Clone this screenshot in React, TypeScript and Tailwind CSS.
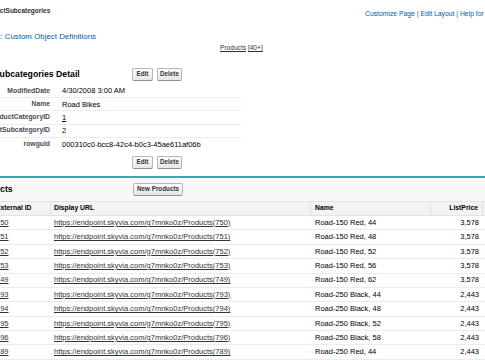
import React from "react";

const rows = [
  ["750", "Road-150 Red, 44", "3,578"],
  ["751", "Road-150 Red, 48", "3,578"],
  ["752", "Road-150 Red, 52", "3,578"],
  ["753", "Road-150 Red, 56", "3,578"],
  ["749", "Road-150 Red, 62", "3,578"],
  ["793", "Road-250 Black, 44", "2,443"],
  ["794", "Road-250 Black, 48", "2,443"],
  ["795", "Road-250 Black, 52", "2,443"],
  ["796", "Road-250 Black, 58", "2,443"],
  ["789", "Road-250 Red, 44", "2,443"],
];

const details: [string, React.ReactNode][] = [
  ["ModifiedDate", "4/30/2008 3:00 AM"],
  ["Name", "Road Bikes"],
  ["ProductCategoryID", <span className="underline">1</span>],
  ["ProductSubcategoryID", "2"],
  ["rowguid", "000310c0-bcc8-42c4-b0c3-45ae611af06b"],
];

function Btn({ children, w }: { children: React.ReactNode; w: string }) {
  return (
    <button
      className={
        "h-[13px] shrink-0 rounded-[2px] border border-[#b5b5b5] border-b-[#8f8f8f] bg-gradient-to-b from-white to-[#e6e6e7] text-[6.3px] font-bold leading-none text-[#333] " +
        w
      }
    >
      {children}
    </button>
  );
}

function Buttons() {
  return (
    <div className="flex gap-[4px]">
      <Btn w="w-[21px]">Edit</Btn>
      <Btn w="w-[25px]">Delete</Btn>
    </div>
  );
}

export default function App() {
  return (
    <div className="relative h-[360px] w-[485px] overflow-hidden bg-white font-['Liberation_Sans',Arial,sans-serif] text-[#000]">
      {/* page header */}
      <div className="flex h-[22px] items-start whitespace-nowrap">
        <div className="-ml-[19px] mt-[7px] w-[384px] shrink-0 text-[6.5px] font-bold leading-[8px] text-[#333]">
          ProductSubcategories
        </div>
        <div className="mt-[10px] text-[6.8px] leading-[8px] text-[#015ba7]">
          Customize Page | Edit Layout | Help for this Page
        </div>
      </div>
      <div className="-ml-[47px] mt-[10px] h-[10px] whitespace-nowrap text-[7.9px] leading-[10px] text-[#015ba7]">
        « Back to List: Custom Object Definitions
      </div>
      <div className="mt-[2px] h-[8px] whitespace-nowrap pl-[220px] text-[6.6px] leading-[8px] text-[#333]">
        <span className="underline">Products</span> <span className="underline">[40+]</span>
      </div>

      {/* detail block */}
      <div className="mt-[14px] flex h-[17px] items-center">
        <div className="-ml-[39px] w-[171px] shrink-0 whitespace-nowrap text-[8.7px] font-bold leading-none text-[#000]">
          ProductSubcategories Detail
        </div>
        <Buttons />
      </div>
      <div className="-ml-[60px] mt-[2px] w-[301px]">
        {details.map(([label, value], i) => (
          <div
            key={label}
            className={
              "flex h-[13.2px] items-center " + (i < details.length - 1 ? "border-b border-[#ececec]" : "")
            }
          >
            <div className="w-[116px] shrink-0 whitespace-nowrap pr-[6px] text-right text-[6.8px] font-bold leading-none text-[#4a4a56]">
              {label}
            </div>
            <div className="whitespace-nowrap pl-[6px] text-[7.5px] leading-none text-[#000]">{value}</div>
          </div>
        ))}
      </div>
      <div className="mt-[5px] flex pl-[132px]">
        <Buttons />
      </div>
      <div className="mt-[7px] h-[2px] bg-[#2fadad]" />

      {/* related list */}
      <div className="h-[182px] bg-[#f8f8f8]">
        <div className="flex h-[23px] items-center">
          <div className="-ml-[25px] w-[158px] shrink-0 whitespace-nowrap text-[8.7px] font-bold leading-none text-[#000]">
            Products
          </div>
          <Btn w="w-[50px]">New Products</Btn>
        </div>
        <div className="-ml-[8px] w-[493px] bg-white">
          <div className="flex h-[15px] items-center border-y border-[#e0e3e5] bg-[#f2f3f3] text-[6.8px] font-bold leading-none text-[#000]">
            <div className="flex h-full w-[59px] shrink-0 items-center whitespace-nowrap border-r border-[#e0e3e5] px-[4px]">
              External ID
            </div>
            <div className="flex h-full w-[260px] shrink-0 items-center border-r border-[#e0e3e5] pl-[3px]">
              Display URL
            </div>
            <div className="flex h-full w-[120px] shrink-0 items-center border-r border-[#e0e3e5] pl-[4px]">
              Name
            </div>
            <div className="flex h-full w-[52px] shrink-0 items-center justify-end border-r border-[#e0e3e5] pr-[4px]">
              ListPrice
            </div>
            <div className="flex-1" />
          </div>
          {rows.map(([id, name, price]) => (
            <div
              key={id}
              className="flex h-[14.4px] items-center border-b border-[#ececec] text-[7.5px] leading-none text-[#000]"
            >
              <div className="w-[59px] shrink-0 px-[4px] text-[#333] underline">{id}</div>
              <div className="w-[260px] shrink-0 whitespace-nowrap pl-[3px] text-[#333] underline">
                https://endpoint.skyvia.com/g7mnko0z/Products({id})
              </div>
              <div className="w-[120px] shrink-0 whitespace-nowrap pl-[4px]">{name}</div>
              <div className="w-[52px] shrink-0 pr-[4px] text-right">{price}</div>
              <div className="flex-1" />
            </div>
          ))}
        </div>
      </div>
    </div>
  );
}
